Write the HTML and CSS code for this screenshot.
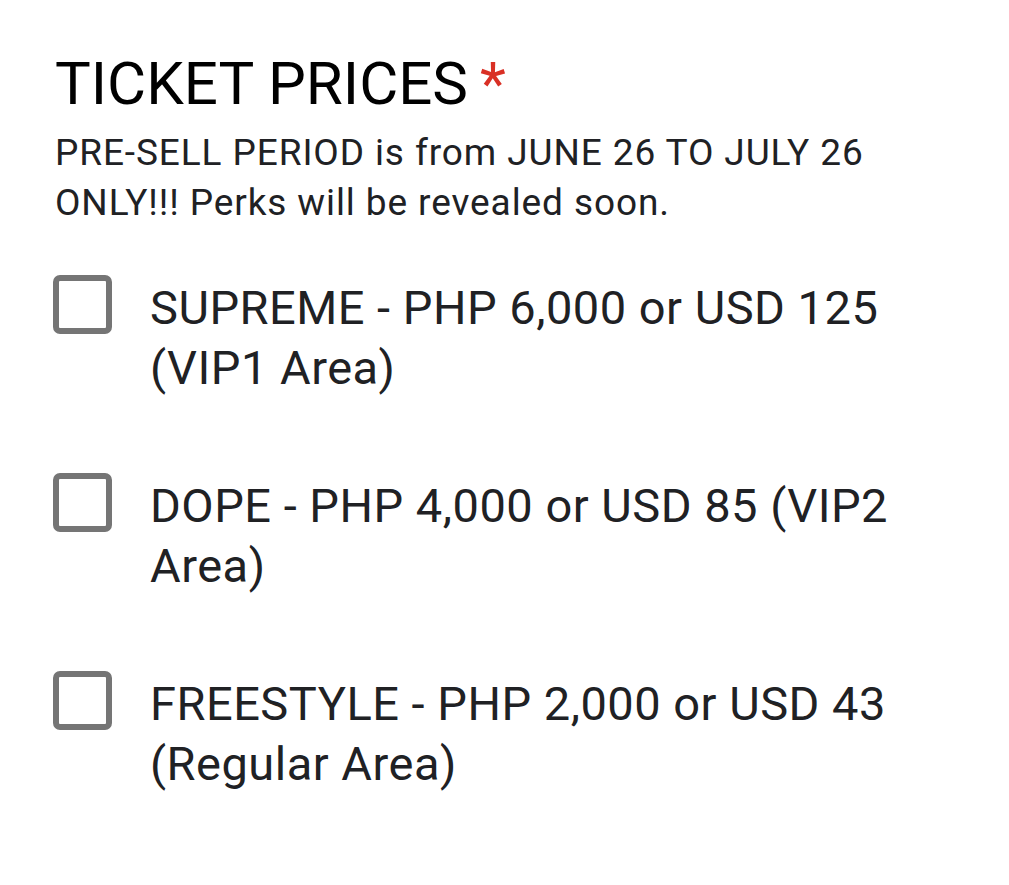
FILE: index.html
```html
<!DOCTYPE html>
<html>
<head>
<meta charset="utf-8">
<link rel="stylesheet" href="styles.css">
</head>
<body>
<div class="question">
  <h1 class="title">TICKET PRICES<span class="req">*</span></h1>
  <p class="desc">PRE-SELL PERIOD is from JUNE 26 TO JULY 26 ONLY!!! Perks will be revealed soon.</p>
  <div class="options">
    <label class="option"><span class="box"></span><span class="text">SUPREME - PHP 6,000 or USD 125 (VIP1 Area)</span></label>
    <label class="option"><span class="box"></span><span class="text">DOPE - PHP 4,000 or USD 85 (VIP2 Area)</span></label>
    <label class="option"><span class="box"></span><span class="text">FREESTYLE - PHP 2,000 or USD 43 (Regular Area)</span></label>
  </div>
</div>
</body>
</html>
```
FILE: styles.css
```css
html, body {
  margin: 0;
  background: #fff;
}
body {
  font-family: Roboto, "Noto Sans", sans-serif;
  color: #202124;
}
.question {
  padding: 48px 0 0 55px;
  width: 880px;
}
.title {
  margin: 0;
  font-size: 60px;
  font-weight: 400;
  line-height: 72px;
  color: #000;
}
.req {
  color: #d93025;
  margin-left: 12px;
}
.desc {
  margin: 8px 0 0;
  font-size: 37px;
  line-height: 50px;
  letter-spacing: 0.9px;
  width: 830px;
}
.options {
  display: flex;
  flex-direction: column;
  gap: 78px;
  margin-top: 50px;
}
.option {
  display: flex;
  align-items: flex-start;
  gap: 38px;
}
.box {
  flex: none;
  width: 47px;
  height: 47px;
  border: 6px solid #757575;
  border-radius: 7px;
  margin: -3px 0 0 -2px;
}
.text {
  font-size: 47px;
  line-height: 60px;
  letter-spacing: 0.5px;
  width: 760px;
}
```
